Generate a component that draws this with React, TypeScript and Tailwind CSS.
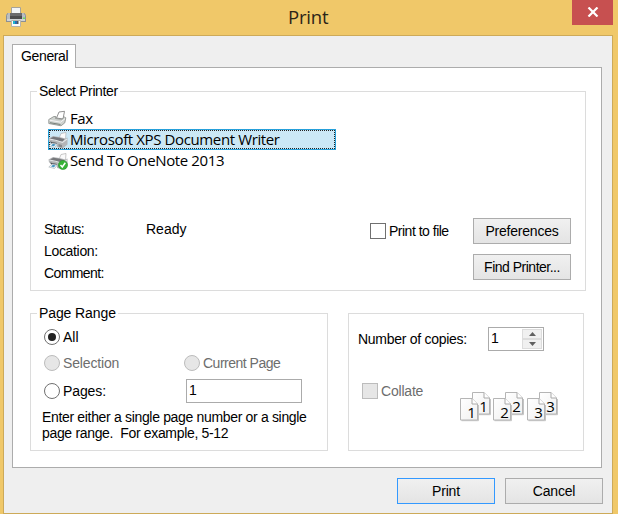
import type { ReactNode } from "react";

const ui = "font-['Liberation_Sans',Arial,sans-serif] text-[14px] leading-[16px] whitespace-pre";

function Button({ children, primary }: { children: ReactNode; primary?: boolean }) {
  return (
    <button
      className={
        "flex h-[26px] w-[98px] shrink-0 items-center justify-center border bg-linear-to-b from-[#f0f0f0] to-[#e4e4e4] " +
        (primary ? "border-[#3399ff]" : "border-[#acacac]")
      }
    >
      {children}
    </button>
  );
}

function Radio({ checked, disabled }: { checked?: boolean; disabled?: boolean }) {
  return (
    <span
      className={
        "flex size-4 shrink-0 items-center justify-center rounded-full border " +
        (disabled ? "border-[#bcbcbc] bg-[#e6e6e6]" : "border-[#707070] bg-white")
      }
    >
      {checked && <span className="size-2 rounded-full bg-[#212121]" />}
    </span>
  );
}

function Check({ disabled }: { disabled?: boolean }) {
  return (
    <span
      className={
        "size-4 shrink-0 border " + (disabled ? "border-[#bcbcbc] bg-[#e6e6e6]" : "border-[#707070] bg-white")
      }
    />
  );
}

function WindowIcon() {
  return (
    <svg width="20" height="20" viewBox="0 0 20 20">
      <path d="M5.500.500h9v7h-9z" fill="#f3f5f6" stroke="#a6a39a" />
      <path d="M0 8.500 1.500 6H4v5h12V6h2.500L20 8.500V15H0z" fill="#b9bdc1" />
      <path d="M.5 15V8.500L1.700 6.300M19.500 15V8.500l-1.200-2.200M0 14.500h20" fill="none" stroke="#8d9092" />
      <path d="M4 6h12v3H4z" fill="#6b6b6d" />
      <path d="M4 9h12v3H4z" fill="#4c4c4e" />
      <path d="M1 12h18v2H1z" fill="#cfd3d6" />
      <path d="M17 10.500h2v1.500h-2z" fill="#68e05c" />
      <path d="M5.500 13.500h9v6h-9z" fill="#fafafa" stroke="#b5b3aa" />
      <path d="M7 14h2v3H7z" fill="#1cb5ce" />
      <path d="M9 14h2v3H9z" fill="#2d69b5" />
      <path d="M11 14h1.500v3H11z" fill="#50555d" />
    </svg>
  );
}

function FaxIcon() {
  return (
    <svg width="20" height="18" viewBox="0 0 20 18">
      <path d="M8.500 8 11 2l5.500-.7L15 9z" fill="#fff" stroke="#858585" strokeWidth=".9" />
      <path d="m.8 9.500 5-3h2L7.500 8.500l6.500.8L16.500 7l1.300.8-1 5-3.800 3L.8 13.500z" fill="#ced2cf" stroke="#858985" strokeWidth=".8" />
      <path d="m1.500 10.200 11 2 4.500-3.500" fill="none" stroke="#f4f4f4" />
      <path d="m2 12.700 10.500 1.800" stroke="#78817a" />
    </svg>
  );
}

function PrinterIcon({ ready }: { ready?: boolean }) {
  return (
    <svg width="20" height="18" viewBox="0 0 20 18">
      <path d="m11 7.500 2-5 5-1L17.500 9z" fill="#fafafa" stroke="#b0b0b0" strokeWidth=".7" />
      <path d="M.5 7.500 5 5l6.500 1 6 1.500 2-1v7l-5 4-5.500-1.500V13L1 10.500z" fill="#b4b6b8" />
      <path d="m1.500 7.800 4-2 6 1 5 1.500-2 2.200L8 10z" fill="#77797c" />
      <path d="M1.500 8 8.500 9.500l6 2 4.500-3.500" fill="none" stroke="#e4e6e7" strokeWidth="1.100" />
      <path d="m2 10.500 7 1.500v2l-5.500-1z" fill="#505256" />
      <path d="M.8 15 4 12l5.500 1-3 3.500z" fill="#edf5f9" stroke="#a5adb1" strokeWidth=".6" />
      <path d="m3 14.500 2-1.700 2.700.6-1.900 1.900z" fill="#4795c2" />
      <path d="m10.500 13 3.500 1v2.500l-3.500-1z" fill="#888a8d" />
      {ready && (
        <>
          <circle cx="15" cy="13" r="4.600" fill="#36b236" stroke="#238f2a" strokeWidth=".5" />
          <path d="m12.500 13 1.800 2 3-4.200" fill="none" stroke="#fff" strokeWidth="1.500" />
        </>
      )}
    </svg>
  );
}

function PageSheet({ x, y, n }: { x: number; y: number; n: number }) {
  return (
    <g transform={`translate(${x} ${y})`}>
      <path d="M1.500 22.700h17V7" fill="none" stroke="#c4c4c4" />
      <path d="M.5.500h11.500l5.500 5.500v16H.5z" fill="url(#sheet)" stroke="#b5b5b5" />
      <path d="M12 .5V6h5.500" fill="#fff" stroke="#a8a8a8" />
      <text x="7.300" y="20" fontSize="15" fill="#000" fontFamily="Open Sans, Noto Sans, sans-serif">
        {n}
      </text>
    </g>
  );
}

function CollateArt() {
  return (
    <svg width="99" height="32" viewBox="0 0 99 32">
      <defs>
        <linearGradient id="sheet" x1="0" y1="0" x2="1" y2="1">
          <stop offset="0" stopColor="#fff" />
          <stop offset="1" stopColor="#f0f0f0" />
        </linearGradient>
      </defs>
      {[1, 2, 3].map((n) => (
        <g key={n} transform={`translate(${[0, 33, 67][n - 1]} 0)`}>
          <PageSheet x={12} y={0} n={n} />
          <PageSheet x={0} y={6} n={n} />
        </g>
      ))}
    </svg>
  );
}

const row =
  "flex h-[21px] w-[288px] items-center font-['Open_Sans','Noto_Sans',sans-serif] text-[15px] leading-[19px] tracking-[-0.38px]";

export default function App() {
  return (
    <div className={"flex h-[514px] w-[618px] flex-col bg-[#f0c869] text-black " + ui}>
      <header className="flex h-[35px] shrink-0 pl-[6px]">
        <div className="w-[20px] pt-[7px]">
          <WindowIcon />
        </div>
        <h1 className="flex-1 pt-[4px] pl-[262px] font-['Open_Sans','Noto_Sans',sans-serif] text-[18.5px] leading-[25px] tracking-[-0.2px] text-[#2b2418]">
          Print
        </h1>
        <button className="mr-[5px] flex h-[25px] w-[41px] items-center justify-center bg-[#c75050]">
          <svg width="12" height="10" viewBox="0 0 12 10" className="-mt-[2px]">
            <path d="m1.500.5 9 9m0-9-9 9" stroke="#fff" strokeWidth="2.200" />
          </svg>
        </button>
      </header>

      <main className="mr-[5px] ml-[3px] flex flex-1 flex-col border border-[#cdaa59] bg-[#efefef] pt-[8px] pl-[8px]">
        <div className="z-10 -mb-px h-[24px] w-[64px] border border-b-0 border-[#acacac] bg-white pt-[3px] pl-[8px]">
          <span className="tracking-[-0.36px]">General</span>
        </div>
        <section className="h-[401px] w-[590px] shrink-0 border border-[#acacac] bg-white pt-[15px] pl-[17px]">
          <fieldset className="h-[208px] w-[556px] border border-[#dcdcdc]">
            <legend className="ml-[6px] h-[17px] px-[2px]">
              <span className="tracking-[-0.38px]">Select Printer</span>
            </legend>
            <div className="mt-[8px] ml-[17px]">
              <div className={row}>
                <FaxIcon />
                <span className="ml-[2px]">Fax</span>
              </div>
              <div className={row + " border border-[#26a0da] bg-[#cbe8f6]"}>
                <div className="flex h-[19px] w-full items-center border border-dotted border-[#222]">
                  <div className="-ml-[2px] w-[22px] shrink-0">
                    <PrinterIcon />
                  </div>
                  <span>Microsoft XPS Document Writer</span>
                </div>
              </div>
              <div className={row}>
                <PrinterIcon ready />
                <span className="ml-[2px]">Send To OneNote 2013</span>
              </div>
            </div>
            <div className="mt-[47px] flex pl-[13px]">
              <div className="grid w-[326px] grid-cols-[102px_1fr] auto-rows-[22px] content-start items-center">
                <span className="tracking-[-0.5px]">Status:</span>
                <span>Ready</span>
                <span className="tracking-[-0.33px]">Location:</span>
                <span />
                <span className="tracking-[-0.6px]">Comment:</span>
              </div>
              <div className="flex h-[26px] w-[103px] items-center gap-[3px]">
                <Check />
                <span className="tracking-[-0.5px]">Print to file</span>
              </div>
              <div className="flex flex-col gap-[10px]">
                <Button>
                  <span className="tracking-[-0.22px]">Preferences</span>
                </Button>
                <Button>
                  <span className="tracking-[-0.5px]">Find Printer...</span>
                </Button>
              </div>
            </div>
          </fieldset>

          <div className="mt-[14px] flex gap-[20px]">
            <fieldset className="h-[146px] w-[298px] border border-[#dcdcdc]">
              <legend className="ml-[6px] h-[17px] px-[2px]">
                <span className="tracking-[-0.1px]">Page Range</span>
              </legend>
              <div className="pt-[3px] pl-[13px]">
                <div className="flex h-[24px] items-center gap-[3px]">
                  <Radio checked />
                  <span>All</span>
                </div>
                <div className="mt-[2px] flex h-[24px] items-center text-[#6d6d6d]">
                  <div className="flex w-[140px] items-center gap-[3px]">
                    <Radio disabled />
                    <span className="tracking-[-0.15px]">Selection</span>
                  </div>
                  <div className="flex items-center gap-[3px]">
                    <Radio disabled />
                    <span className="tracking-[-0.5px]">Current Page</span>
                  </div>
                </div>
                <div className="mt-[4px] flex h-[24px] items-center">
                  <div className="flex w-[142px] items-center gap-[3px]">
                    <Radio />
                    <span className="tracking-[-0.1px]">Pages:</span>
                  </div>
                  <div className="h-[24px] w-[116px] border border-[#ababab] pt-[2px] pl-[2px]">
                    <span>1</span>
                  </div>
                </div>
                <p className="mt-[6px] -ml-[2px] tracking-[-0.33px]">
                  <span>Enter either a single page number or a single</span>
                  <br />
                  <span>page range.  For example, 5-12</span>
                </p>
              </div>
            </fieldset>

            <div className="mt-[8px] h-[138px] w-[236px] border border-[#dcdcdc] pt-[13px] pl-[9px]">
              <div className="flex h-[24px] items-center">
                <span className="w-[130px] tracking-[-0.28px]">Number of copies:</span>
                <div className="flex h-[24px] w-[56px] justify-between border border-[#ababab] p-px">
                  <span className="pt-px pl-px">1</span>
                  <div className="flex w-[20px] flex-col justify-between">
                    {["M0 4 3.500 0 7 4z", "M0 0h7L3.500 4z"].map((d) => (
                      <div key={d} className="flex h-[10px] items-center justify-center border border-[#dcdcdc] bg-[#f0f0f0]">
                        <svg width="7" height="4" viewBox="0 0 7 4">
                          <path d={d} fill="#606060" />
                        </svg>
                      </div>
                    ))}
                  </div>
                </div>
              </div>
              <div className="mt-[32px] flex pl-[4px] text-[#6d6d6d]">
                <div className="flex h-[16px] w-[98px] items-center gap-[3px]">
                  <Check disabled />
                  <span className="tracking-[-0.2px]">Collate</span>
                </div>
                <div className="mt-[9px]">
                  <CollateArt />
                </div>
              </div>
            </div>
          </div>
        </section>
        <footer className="mt-[10px] flex gap-[10px] pl-[385px]">
          <Button primary>
            <span className="tracking-[-0.2px]">Print</span>
          </Button>
          <Button>
            <span className="tracking-[-0.2px]">Cancel</span>
          </Button>
        </footer>
      </main>
    </div>
  );
}
